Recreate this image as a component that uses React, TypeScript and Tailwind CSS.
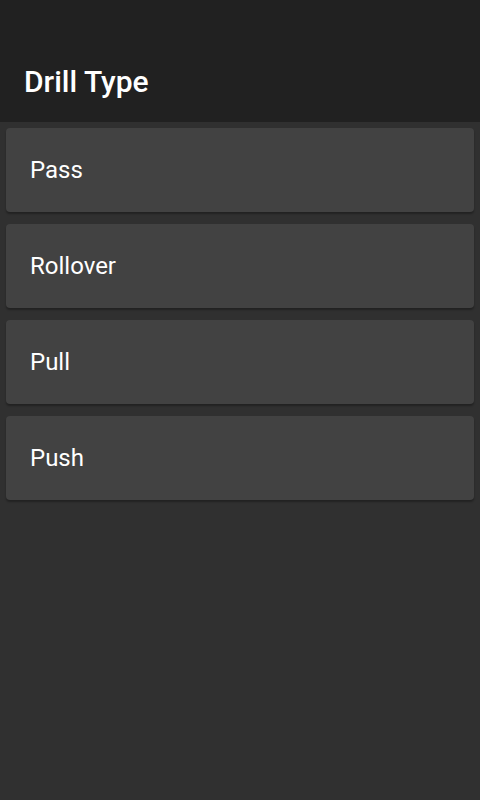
import React from 'react';

const drills = ['Pass', 'Rollover', 'Pull', 'Push'];

export default function App() {
  return (
    <div className="min-h-[800px] bg-[#303030] font-['Roboto',sans-serif]">
      <header className="h-[122px] bg-[#212121] px-6 pt-[64px]">
        <h1 className="text-[30px] leading-[36px] font-medium text-white">Drill Type</h1>
      </header>
      <ul className="flex flex-col gap-3 px-[6px] pt-[6px]">
        {drills.map(d => (
          <li
            key={d}
            className="flex h-[84px] items-center rounded bg-[#424242] px-6 text-[24px] text-white shadow-[0_2px_2px_rgba(0,0,0,0.3)]"
          >
            {d}
          </li>
        ))}
      </ul>
    </div>
  );
}
